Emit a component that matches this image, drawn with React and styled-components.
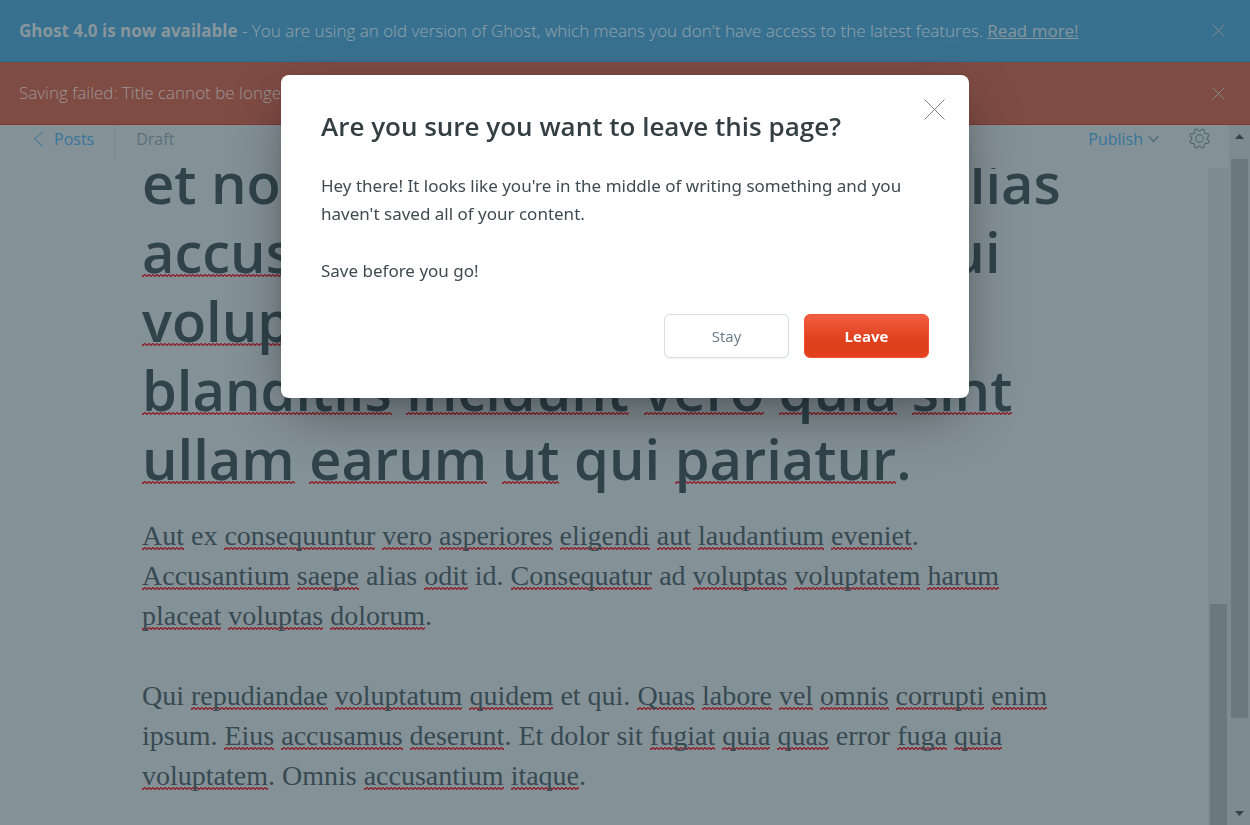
import React from "react";
import styled, { createGlobalStyle, css } from "styled-components";

const squiggle = (color) =>
  `url("data:image/svg+xml,${encodeURIComponent(
    `<svg xmlns='http://www.w3.org/2000/svg' width='4' height='3'><path d='M-1 0.5L1 2.5L3 0.5L5 2.5' fill='none' stroke='${color}' stroke-width='1.4'/></svg>`
  )}")`;

const GlobalStyle = createGlobalStyle`
  * { box-sizing: border-box; }
  body {
    margin: 0;
    background: #849197;
    font-family: "Open Sans", "Noto Sans", sans-serif;
    color: #30434b;
    overflow: hidden;
  }
  h1, h2, p { margin: 0; }
  button { font-family: inherit; cursor: pointer; }
`;

const Page = styled.div`
  display: flex;
  flex-direction: column;
  height: 100vh;
`;

const Alert = styled.aside`
  display: flex;
  align-items: center;
  justify-content: space-between;
  flex: none;
  height: ${(p) => (p.$kind === "error" ? 63 : 62)}px;
  padding: 0 25px 0 19px;
  border-bottom: 1px solid ${(p) => (p.$kind === "error" ? "#7f3a34" : "#2c6a90")};
  background: ${(p) => (p.$kind === "error" ? "#7f4c44" : "#38718f")};
  color: ${(p) => (p.$kind === "error" ? "#9c9797" : "#94a3ab")};
  font-size: 17px;
  font-weight: 300;
  line-height: 24px;
  white-space: nowrap;

  b { font-weight: 700; color: #87969d; }
  a { color: #87969d; font-weight: 400; text-decoration: underline; }
`;

const IconButton = styled.button`
  display: flex;
  padding: 0;
  border: 0;
  background: none;
  color: inherit;
`;

const DismissButton = styled(IconButton)`
  color: #84898f;
`;

const Workspace = styled.div`
  display: flex;
  flex: 1;
  min-height: 0;
`;

const Editor = styled.main`
  display: flex;
  flex-direction: column;
  flex: 1;
  min-width: 0;
`;

const Toolbar = styled.header`
  display: flex;
  justify-content: space-between;
  align-items: flex-start;
  flex: none;
  height: 43px;
  padding: 0 19px 0 34px;
  font-size: 16px;
  line-height: 28px;
`;

const ToolGroup = styled.div`
  display: flex;
  align-items: flex-start;
  gap: ${(p) => p.$gap}px;
`;

const BackLink = styled.a`
  display: flex;
  align-items: center;
  gap: 10px;
  height: 36px;
  padding: 0 20px 8px 0;
  border-right: 1px solid #7a888f;
  color: #37769a;
  text-decoration: none;
`;

const Status = styled.span`
  color: #5d7078;
`;

const PublishButton = styled.button`
  display: flex;
  align-items: center;
  gap: 5px;
  height: 28px;
  padding: 0;
  border: 0;
  background: none;
  color: #37769a;
  font-size: 16px;
`;

const SettingsButton = styled(IconButton)`
  align-items: center;
  height: 27px;
  color: #566a73;
`;

const Scroller = styled.div`
  display: flex;
  flex: 1;
  min-height: 0;
  overflow: hidden;
`;

const Document = styled.article`
  flex: 1;
  min-width: 0;
  margin-top: -20px;
  padding-left: 142px;
  white-space: nowrap;
`;

const Title = styled.h1`
  font-size: 56px;
  font-weight: 600;
  line-height: 69px;
`;

const Paragraph = styled.p`
  margin-top: ${(p) => (p.$first ? 23 : 40)}px;
  font-family: "Liberation Serif", serif;
  font-size: 28px;
  line-height: 40px;
  color: #374a52;
`;

const Line = styled.span`
  display: block;
`;

const Misspelt = styled.span`
  background: ${squiggle("#8b2932")} repeat-x 0 ${(p) => (p.$large ? 61 : 27)}px;
`;

const Track = styled.div`
  display: flex;
  flex-direction: column;
  align-items: center;
  flex: none;
  width: 21px;
  background: #7e8b91;
`;

const Thumb = styled.div`
  width: 17px;
  background: #6b787e;
  ${(p) =>
    p.$inner
      ? css`margin-top: 436px; flex: 1;`
      : css`flex: 0 1 559px;`}
`;

const ScrollArrow = styled.svg`
  flex: none;
  margin: ${(p) => (p.$down ? "auto 0 9px" : "9px 0 20px")};
`;

const Overlay = styled.div`
  position: fixed;
  inset: 0;
  display: flex;
  justify-content: center;
  align-items: flex-start;
  padding: 75px 24px 24px;
`;

const Dialog = styled.section`
  width: 100%;
  max-width: 688px;
  padding: 32px 40px 40px;
  border-radius: 8px;
  background: #fff;
  box-shadow: 0 0 7px rgba(0, 0, 0, 0.08), 0 20px 55px -10px rgba(0, 0, 0, 0.45);
`;

const DialogHead = styled.div`
  display: flex;
  justify-content: space-between;
  align-items: flex-start;
  margin-right: -16px;

  h2 {
    font-size: 26px;
    font-weight: 600;
    line-height: 38px;
    color: #343f44;
  }
`;

const CloseDialog = styled(IconButton)`
  margin-top: -8px;
  color: #808284;
`;

const DialogBody = styled.div`
  display: grid;
  gap: 29px;
  margin: 27px 0 29px;
  font-family: "Noto Sans", "Open Sans", sans-serif;
  font-size: 17px;
  line-height: 28px;
  color: #3e4b50;
`;

const Actions = styled.footer`
  display: flex;
  justify-content: flex-end;
  gap: 15px;
`;

const Button = styled.button`
  width: 125px;
  height: 44px;
  border: 1px solid #d5dfe3;
  border-radius: 6px;
  background: #fff;
  color: #667b86;
  font-size: 15px;
  box-shadow: 0 1px 2px rgba(0, 0, 0, 0.06);

  ${(p) =>
    p.$danger &&
    css`
      border-color: #ee5435;
      background: linear-gradient(#f05f41, #e03f1c 60%, #e03f1c 85%, #e5431f);
      color: #fff;
      font-weight: 700;
      box-shadow: none;
    `}
`;

const Cross = ({ size }) => (
  <svg width={size} height={size} viewBox={`0 0 ${size} ${size}`} fill="none" stroke="currentColor" aria-hidden="true">
    <path d={`M.5 .5L${size - 0.5} ${size - 0.5}M${size - 0.5} .5L.5 ${size - 0.5}`} />
  </svg>
);

/* Eight-toothed cog: the teeth sit either side of each axis, with a notch on the axis. */
const Gear = () => {
  const points = [];
  for (let i = 0; i < 128; i += 1) {
    const a = (i / 128) * Math.PI * 2;
    const wave = Math.tanh(1.6 * Math.cos(8 * a + Math.PI)) / Math.tanh(1.6);
    const r = 8.8 + 1.2 * wave;
    points.push(`${(10.5 + r * Math.cos(a)).toFixed(2)} ${(10.5 + r * Math.sin(a)).toFixed(2)}`);
  }
  return (
    <svg width="21" height="21" viewBox="0 0 21 21" fill="none" stroke="currentColor" strokeWidth="1.2" aria-hidden="true">
      <path d={`M${points.join("L")}Z`} strokeLinejoin="round" />
      <circle cx="10.5" cy="10.5" r="3.8" />
    </svg>
  );
};

/* Words wrapped in underscores carry a spelling mark. */
const Marked = ({ text, large }) =>
  text.split(/(_[^_]+_)/).map((part, i) =>
    part.startsWith("_") ? (
      <Misspelt key={i} $large={large}>{part.slice(1, -1)}</Misspelt>
    ) : (
      part
    )
  );

const titleLines = [
  "et nobis minima eligendi a at alias",
  "_accusamus_ _dolores_ _quisquis_ qui",
  "_voluptatem_ _molestias_ _dolor_",
  "_blanditiis_ _incidunt_ _vero_ _quia_ _sint_",
  "_ullam_ _earum_ _ut_ qui _pariatur_.",
];

const paragraphs = [
  [
    "_Aut_ ex _consequuntur_ _vero_ _asperiores_ _eligendi_ _aut_ _laudantium_ _eveniet_.",
    "_Accusantium_ _saepe_ alias _odit_ id. _Consequatur_ ad _voluptas_ _voluptatem_ _harum_",
    "_placeat_ _voluptas_ _dolorum_.",
  ],
  [
    "Qui _repudiandae_ _voluptatum_ _quidem_ et qui. _Quas_ _labore_ _vel_ _omnis_ _corrupti_ _enim_",
    "ipsum. _Eius_ _accusamus_ _deserunt_. Et dolor sit _fugiat_ _quia_ _quas_ error _fuga_ _quia_",
    "_voluptatem_. Omnis _accusantium_ _itaque_.",
  ],
];

export default function App() {
  return (
    <>
      <GlobalStyle />
      <Page>
        <Alert $kind="info">
          <span>
            <b>Ghost 4.0 is now available</b> - You are using an old version of Ghost, which means you don't have
            access to the latest features. <a href="#read-more">Read more!</a>
          </span>
          <DismissButton aria-label="Dismiss update notice"><Cross size={13} /></DismissButton>
        </Alert>
        <Alert $kind="error">
          <span>Saving failed: Title cannot be longer than 255 characters.</span>
          <DismissButton aria-label="Dismiss error"><Cross size={13} /></DismissButton>
        </Alert>
        <Workspace>
          <Editor>
            <Toolbar>
              <ToolGroup $gap={21}>
                <BackLink href="#posts">
                  <svg width="10" height="16" viewBox="0 0 10 16" fill="none" stroke="currentColor" aria-hidden="true">
                    <path d="M9 .5L.7 8L9 15.5" />
                  </svg>
                  Posts
                </BackLink>
                <Status>Draft</Status>
              </ToolGroup>
              <ToolGroup $gap={30}>
                <PublishButton>
                  Publish
                  <svg width="11" height="8" viewBox="0 0 11 8" fill="none" stroke="#4c6d7e" strokeWidth="1.2" aria-hidden="true">
                    <path d="M.5 1L5.5 6.5L10.5 1" />
                  </svg>
                </PublishButton>
                <SettingsButton aria-label="Settings"><Gear /></SettingsButton>
              </ToolGroup>
            </Toolbar>
            <Scroller>
              <Document>
                <Title>
                  {titleLines.map((line) => (
                    <Line key={line}><Marked text={line} large /></Line>
                  ))}
                </Title>
                {paragraphs.map((lines, i) => (
                  <Paragraph key={i} $first={i === 0}>
                    {lines.map((line) => (
                      <Line key={line}><Marked text={line} /></Line>
                    ))}
                  </Paragraph>
                ))}
              </Document>
              <Track><Thumb $inner /></Track>
            </Scroller>
          </Editor>
          <Track>
            <ScrollArrow width="9" height="5" viewBox="0 0 9 5" fill="#35444b"><path d="M0 5L4.500 0L9 5Z" /></ScrollArrow>
            <Thumb />
            <ScrollArrow $down width="9" height="5" viewBox="0 0 9 5" fill="#35444b"><path d="M0 0L4.500 5L9 0Z" /></ScrollArrow>
          </Track>
        </Workspace>
      </Page>
      <Overlay>
        <Dialog role="dialog" aria-modal="true" aria-labelledby="leave-title">
          <DialogHead>
            <h2 id="leave-title">Are you sure you want to leave this page?</h2>
            <CloseDialog aria-label="Close"><Cross size={21} /></CloseDialog>
          </DialogHead>
          <DialogBody>
            <p>
              Hey there! It looks like you're in the middle of writing something and you
              <br />
              haven't saved all of your content.
            </p>
            <p>Save before you go!</p>
          </DialogBody>
          <Actions>
            <Button type="button">Stay</Button>
            <Button type="button" $danger>Leave</Button>
          </Actions>
        </Dialog>
      </Overlay>
    </>
  );
}
